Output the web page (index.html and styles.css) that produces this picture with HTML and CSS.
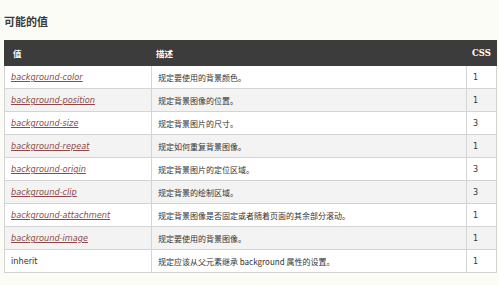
FILE: index.html
```html
<!DOCTYPE html>
<html>
<head>
<meta charset="utf-8">
<link rel="stylesheet" href="styles.css">
</head>
<body>
<div class="page">
  <h2 class="title">可能的值</h2>
  <table class="ref">
    <thead>
      <tr><th class="c1">值</th><th class="c2">描述</th><th class="c3">CSS</th></tr>
    </thead>
    <tbody>
      <tr><td><a href="#">background-color</a></td><td>规定要使用的背景颜色。</td><td class="num">1</td></tr>
      <tr><td><a href="#">background-position</a></td><td>规定背景图像的位置。</td><td class="num">1</td></tr>
      <tr><td><a href="#">background-size</a></td><td>规定背景图片的尺寸。</td><td class="num">3</td></tr>
      <tr><td><a href="#">background-repeat</a></td><td>规定如何重复背景图像。</td><td class="num">1</td></tr>
      <tr><td><a href="#">background-origin</a></td><td>规定背景图片的定位区域。</td><td class="num">3</td></tr>
      <tr><td><a href="#">background-clip</a></td><td>规定背景的绘制区域。</td><td class="num">3</td></tr>
      <tr><td><a href="#">background-attachment</a></td><td>规定背景图像是否固定或者随着页面的其余部分滚动。</td><td class="num">1</td></tr>
      <tr><td><a href="#">background-image</a></td><td>规定要使用的背景图像。</td><td class="num">1</td></tr>
      <tr><td class="plain">inherit</td><td>规定应该从父元素继承 background 属性的设置。</td><td class="num">1</td></tr>
    </tbody>
  </table>
</div>
</body>
</html>
```

FILE: styles.css
```css
html, body {
  margin: 0;
  padding: 0;
  background: #fcfcf7;
}
.page {
  padding: 16px 3px 0 4px;
  font-family: "DejaVu Sans", "Noto Sans CJK SC", sans-serif;
  color: #333;
}
.title {
  margin: 0 0 10px 0;
  font-size: 11px;
  line-height: 14px;
  font-weight: bold;
  color: #3a3a3a;
  font-family: "DejaVu Sans", "Noto Sans CJK SC", sans-serif;
}
.ref {
  width: 492px;
  border-collapse: collapse;
  table-layout: fixed;
  font-size: 8px;
}
.ref th {
  background: #3c3c3c;
  color: #fff;
  height: 25px;
  padding: 0 0 0 7px;
  text-align: left;
  font-size: 8.5px;
  font-weight: bold;
  border: 1px solid #3c3c3c;
  box-sizing: border-box;
  font-family: "Noto Sans CJK SC", sans-serif;
}
.ref th.c1 { width: 147px; padding-left: 8px; }
.ref th.c2 { width: 315px; padding-left: 4px; }
.ref th.c3 { width: 30px; padding-left: 5px; font-family: "DejaVu Serif", serif; font-size: 8.5px; }
.ref td {
  height: 23px;
  padding: 0 0 0 6px;
  border: 1px solid #d4d4d4;
  background: #fff;
  box-sizing: border-box;
  white-space: nowrap;
  font-family: "Noto Sans CJK SC", sans-serif;
  font-size: 8px;
  color: #333;
}
.ref tbody tr:nth-child(even) td { background: #f3f3f3; }
.ref td:first-child { font-family: "DejaVu Sans", sans-serif; font-size: 8.2px; }
.ref td a {
  color: #8e4848;
  font-style: italic;
  text-decoration: underline;
}
.ref td.plain { color: #333; }
.ref td.num { font-family: "DejaVu Sans", sans-serif; }
```
